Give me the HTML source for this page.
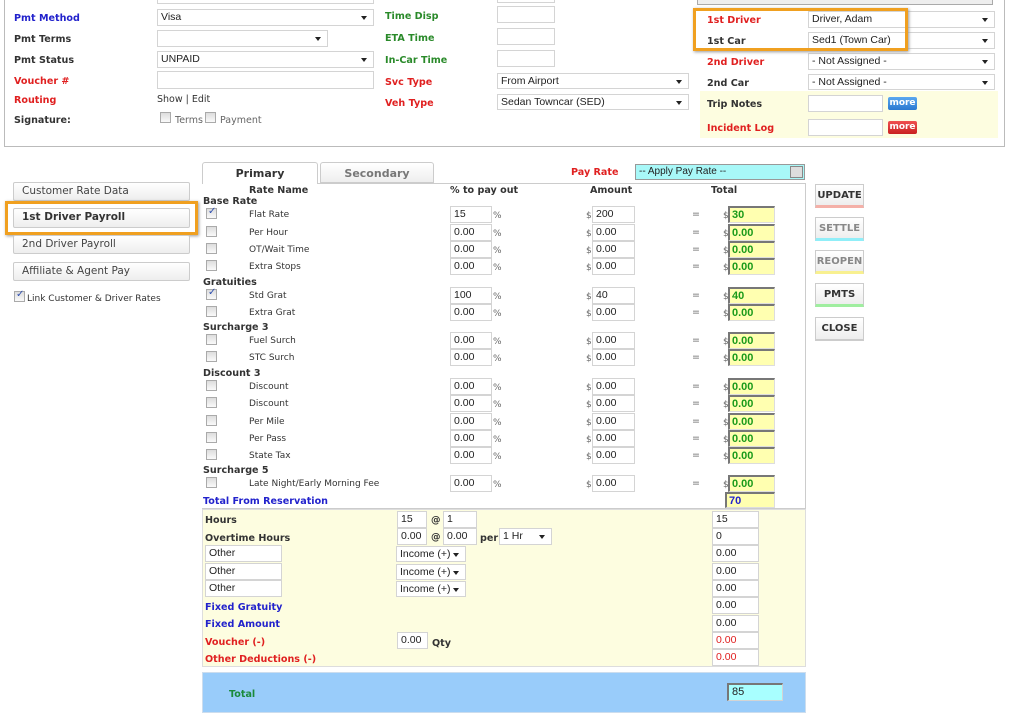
<!DOCTYPE html>
<html><head><meta charset="utf-8"><style>
*{box-sizing:border-box;margin:0;padding:0}
body{width:1024px;height:723px;background:#fff;position:relative;overflow:hidden;font-family:"DejaVu Sans","Liberation Sans",sans-serif;font-size:10px;color:#333}
.a{position:absolute}
.l{position:absolute;font-weight:bold;font-size:9.6px;line-height:12px;white-space:nowrap;margin-top:2px}
.bl{color:#2222cc}.rd{color:#e02020}.gr{color:#2a8a2a}.dk{color:#333}
.in{position:absolute;background:#fff;border:1px solid #d4d4d4;font-size:10.5px;line-height:15px;padding-left:3px;color:#222;white-space:nowrap;font-family:"Liberation Sans",sans-serif}
.sel:after{content:"";position:absolute;right:6px;top:6px;border-left:3.5px solid transparent;border-right:3.5px solid transparent;border-top:4px solid #222}
.cb{position:absolute;width:11px;height:11px;border:1px solid #aaa;background:linear-gradient(#ddd,#fafafa)}
.ck:after{content:"✓";position:absolute;left:1px;top:-3px;font-size:10px;color:#3050b0;font-weight:bold}
.t{position:absolute;font-size:9.5px;line-height:12px;white-space:nowrap;color:#333;margin-top:1px}
.tot{position:absolute;background:#ffffb0;border:1px solid #ddd;border-top:2px solid #777;border-left:2px solid #777;color:#1a9a1a;font-weight:bold;font-size:11px;line-height:14px;padding-left:2px;font-family:"Liberation Sans",sans-serif}
.btn{position:absolute;left:815px;width:49px;height:24px;border:1px solid #ccc;background:linear-gradient(#fff,#eee);font-weight:bold;font-size:10px;text-align:center;line-height:21px}
.lb{position:absolute;left:13px;width:177px;height:19px;border:1px solid #ccc;border-radius:2px;background:linear-gradient(#fff,#eee);font-size:10.5px;line-height:17px;padding-left:8px;color:#444}
</style></head><body>

<div class="a" style="left:4px;top:-2px;width:1001px;height:149px;border:1px solid #bbb;border-top:none"></div>
<div class="in" style="left:157px;top:-8px;width:217px;height:12px"></div>
<div class="in" style="left:497px;top:-8px;width:58px;height:11px"></div>
<div class="a" style="left:697px;top:-4px;width:296px;height:9px;border:1px solid #aaa;background:#eee"></div>

<div class="l bl" style="left:14px;top:11px">Pmt Method</div>
<div class="l dk" style="left:14px;top:32px">Pmt Terms</div>
<div class="l dk" style="left:14px;top:53px">Pmt Status</div>
<div class="l rd" style="left:14px;top:74px">Voucher #</div>
<div class="l rd" style="left:14px;top:93px">Routing</div>
<div class="l dk" style="left:14px;top:113px">Signature:</div>
<div class="in sel" style="left:157px;top:9px;width:217px;height:17px">Visa</div>
<div class="in sel" style="left:157px;top:30px;width:171px;height:17px"></div>
<div class="in sel" style="left:157px;top:51px;width:217px;height:17px">UNPAID</div>
<div class="in" style="left:157px;top:71px;width:217px;height:18px"></div>
<div class="t" style="left:157px;top:93px">Show | Edit</div>
<div class="cb" style="left:160px;top:112px"></div><div class="t" style="left:175px;top:114px;color:#666">Terms</div>
<div class="cb" style="left:205px;top:112px"></div><div class="t" style="left:220px;top:114px;color:#666">Payment</div>

<div class="l gr" style="left:385px;top:9px">Time Disp</div>
<div class="l gr" style="left:385px;top:31px">ETA Time</div>
<div class="l gr" style="left:385px;top:53px">In-Car Time</div>
<div class="l rd" style="left:385px;top:75px">Svc Type</div>
<div class="l rd" style="left:385px;top:96px">Veh Type</div>
<div class="in" style="left:497px;top:6px;width:58px;height:17px"></div>
<div class="in" style="left:497px;top:28px;width:58px;height:17px"></div>
<div class="in" style="left:497px;top:50px;width:58px;height:17px"></div>
<div class="in sel" style="left:497px;top:73px;width:192px;height:16px">From Airport</div>
<div class="in sel" style="left:497px;top:94px;width:192px;height:16px">Sedan Towncar (SED)</div>

<div class="l rd" style="left:707px;top:13px">1st Driver</div>
<div class="l dk" style="left:707px;top:34px">1st Car</div>
<div class="l rd" style="left:707px;top:55px">2nd Driver</div>
<div class="l dk" style="left:707px;top:76px">2nd Car</div>
<div class="in sel" style="left:808px;top:11px;width:187px;height:17px">Driver, Adam</div>
<div class="in sel" style="left:808px;top:32px;width:187px;height:17px">Sed1 (Town Car)</div>
<div class="in sel" style="left:808px;top:53px;width:187px;height:17px">- Not Assigned -</div>
<div class="in sel" style="left:808px;top:74px;width:187px;height:16px">- Not Assigned -</div>
<div class="a" style="left:693px;top:8px;width:215px;height:43px;border:3px solid #f0a020;box-shadow:1px 1px 3px #999"></div>
<div class="a" style="left:700px;top:91px;width:298px;height:47px;background:#fdfde0"></div>
<div class="l dk" style="left:707px;top:97px">Trip Notes</div>
<div class="l rd" style="left:707px;top:121px">Incident Log</div>
<div class="in" style="left:808px;top:95px;width:75px;height:17px"></div>
<div class="in" style="left:808px;top:119px;width:75px;height:17px"></div>
<div class="a" style="left:888px;top:97px;width:29px;height:13px;background:linear-gradient(#5aa8f0,#2a78d0);border-radius:2px;color:#fff;font-weight:bold;font-size:9px;text-align:center;line-height:12px">more</div>
<div class="a" style="left:888px;top:121px;width:29px;height:13px;background:linear-gradient(#f05050,#c82020);border-radius:2px;color:#fff;font-weight:bold;font-size:9px;text-align:center;line-height:12px">more</div>

<div class="lb" style="top:182px">Customer Rate Data</div>
<div class="lb" style="top:208px;height:20px;font-weight:bold;color:#333">1st Driver Payroll</div>
<div class="a" style="left:5px;top:201px;width:193px;height:34px;border:3px solid #f0a020;box-shadow:1px 1px 3px #999"></div>
<div class="lb" style="top:235px">2nd Driver Payroll</div>
<div class="lb" style="top:262px">Affiliate &amp; Agent Pay</div>
<div class="cb ck" style="left:14px;top:291px"></div>
<div class="t" style="left:27px;top:292px;font-size:9px">Link Customer &amp; Driver Rates</div>

<div class="a" style="left:202px;top:183px;width:604px;height:326px;border-right:1px solid #ccc;border-bottom:1px solid #ccc;border-top:1px solid #ccc"></div>
<div class="a" style="left:202px;top:162px;width:116px;height:22px;border:1px solid #ccc;border-bottom:none;background:#fff;border-radius:3px 3px 0 0;text-align:center;font-weight:bold;font-size:11px;line-height:21px">Primary</div>
<div class="a" style="left:320px;top:162px;width:114px;height:21px;border:1px solid #ccc;background:linear-gradient(#fff,#eee);border-radius:3px 3px 0 0;text-align:center;font-weight:bold;font-size:11px;line-height:21px;color:#777">Secondary</div>
<div class="l rd" style="left:571px;top:165px">Pay Rate</div>
<div class="in" style="left:635px;top:164px;width:170px;height:16px;background:#a8f8f8;border:1px solid #999;font-size:10px;line-height:14px">-- Apply Pay Rate --<span style="position:absolute;right:1px;top:1px;width:13px;height:12px;background:#ddd;border:1px solid #888"></span></div>

<div class="l dk" style="left:249px;top:183px">Rate Name</div>
<div class="l dk" style="left:450px;top:183px">% to pay out</div>
<div class="l dk" style="left:590px;top:183px">Amount</div>
<div class="l dk" style="left:711px;top:183px">Total</div>

<div class="l dk" style="left:203px;top:194px">Base Rate</div>
<div class="l dk" style="left:203px;top:275px">Gratuities</div>
<div class="l dk" style="left:203px;top:320px">Surcharge 3</div>
<div class="l dk" style="left:203px;top:366px">Discount 3</div>
<div class="l dk" style="left:203px;top:463px">Surcharge 5</div>
<div class="l bl" style="left:203px;top:494px">Total From Reservation</div>
<div class="tot" style="left:725px;top:492px;width:50px;height:16px;color:#2222cc">70</div>

<div id="rows"></div>
<script>
var R=[[214,"Flat Rate","15","200","30",1],[232,"Per Hour"],[249,"OT/Wait Time"],[266,"Extra Stops"],[295,"Std Grat","100","40","40",1],[312,"Extra Grat"],[340,"Fuel Surch"],[357,"STC Surch"],[386,"Discount"],[403,"Discount"],[421,"Per Mile"],[438,"Per Pass"],[455,"State Tax"],[483,"Late Night/Early Morning Fee"]];
var h="";R.forEach(function(r){var y=r[0];
h+='<div class="cb'+(r[5]?' ck':'')+'" style="left:206px;top:'+(y-6)+'px"></div>';
h+='<div class="t" style="left:249px;top:'+(y-6)+'px;font-size:9px">'+r[1]+'</div>';
h+='<div class="in" style="left:450px;top:'+(y-8)+'px;width:42px;height:17px">'+(r[2]||"0.00")+'</div>';
h+='<div class="t" style="left:493px;top:'+(y-5)+'px;font-size:9px;color:#666">%</div>';
h+='<div class="t" style="left:586px;top:'+(y-5)+'px;font-size:9px;color:#666">$</div>';
h+='<div class="in" style="left:592px;top:'+(y-8)+'px;width:43px;height:17px">'+(r[3]||"0.00")+'</div>';
h+='<div class="t" style="left:692px;top:'+(y-6)+'px;color:#666">=</div>';
h+='<div class="t" style="left:723px;top:'+(y-5)+'px;font-size:9px;color:#666">$</div>';
h+='<div class="tot" style="left:728px;top:'+(y-8)+'px;width:47px;height:17px">'+(r[4]||"0.00")+'</div>';});
document.getElementById("rows").innerHTML=h;
</script>

<div class="a" style="left:202px;top:509px;width:604px;height:158px;background:#fdfde0;border:1px solid #ddd"></div>
<div class="l dk" style="left:205px;top:513px">Hours</div>
<div class="in" style="left:397px;top:511px;width:30px;height:17px">15</div>
<div class="t dk" style="left:431px;top:514px;font-weight:bold">@</div>
<div class="in" style="left:443px;top:511px;width:34px;height:17px">1</div>
<div class="in" style="left:712px;top:511px;width:47px;height:17px">15</div>
<div class="l dk" style="left:205px;top:531px">Overtime Hours</div>
<div class="in" style="left:397px;top:528px;width:30px;height:17px">0.00</div>
<div class="t dk" style="left:431px;top:531px;font-weight:bold">@</div>
<div class="in" style="left:443px;top:528px;width:34px;height:17px">0.00</div>
<div class="l dk" style="left:480px;top:531px">per</div>
<div class="in sel" style="left:499px;top:528px;width:53px;height:17px">1 Hr</div>
<div class="in" style="left:712px;top:528px;width:47px;height:17px">0</div>
<div class="in" style="left:205px;top:545px;width:77px;height:17px">Other</div>
<div class="in sel" style="left:396px;top:546px;width:70px;height:16px">Income (+)</div>
<div class="in" style="left:712px;top:545px;width:47px;height:17px">0.00</div>
<div class="in" style="left:205px;top:563px;width:77px;height:17px">Other</div>
<div class="in sel" style="left:396px;top:564px;width:70px;height:16px">Income (+)</div>
<div class="in" style="left:712px;top:563px;width:47px;height:17px">0.00</div>
<div class="in" style="left:205px;top:580px;width:77px;height:17px">Other</div>
<div class="in sel" style="left:396px;top:581px;width:70px;height:16px">Income (+)</div>
<div class="in" style="left:712px;top:580px;width:47px;height:17px">0.00</div>
<div class="l bl" style="left:205px;top:600px">Fixed Gratuity</div>
<div class="in" style="left:712px;top:597px;width:47px;height:17px">0.00</div>
<div class="l bl" style="left:205px;top:617px">Fixed Amount</div>
<div class="in" style="left:712px;top:615px;width:47px;height:17px">0.00</div>
<div class="l rd" style="left:205px;top:635px">Voucher (-)</div>
<div class="in" style="left:397px;top:632px;width:31px;height:17px">0.00</div>
<div class="l dk" style="left:432px;top:636px">Qty</div>
<div class="in" style="left:712px;top:632px;width:47px;height:17px;color:#e02020">0.00</div>
<div class="l rd" style="left:205px;top:652px">Other Deductions (-)</div>
<div class="in" style="left:712px;top:649px;width:47px;height:17px;color:#e02020">0.00</div>

<div class="a" style="left:202px;top:672px;width:604px;height:41px;background:#99ccfa;border:1px solid #cde"></div>
<div class="l" style="left:229px;top:687px;color:#1a8a3a">Total</div>
<div class="in" style="left:727px;top:683px;width:56px;height:18px;background:#a8ffff;border-top:2px solid #777;border-left:2px solid #777;font-size:11px;line-height:14px">85</div>

<div class="btn" style="top:184px;border-bottom:3px solid #f4b0a8">UPDATE</div>
<div class="btn" style="top:217px;border-bottom:3px solid #90eef8;color:#888">SETTLE</div>
<div class="btn" style="top:250px;border-bottom:3px solid #f8f090;color:#888">REOPEN</div>
<div class="btn" style="top:283px;border-bottom:3px solid #a0eea0">PMTS</div>
<div class="btn" style="top:317px;border-bottom:2px solid #ccc">CLOSE</div>
</body></html>
